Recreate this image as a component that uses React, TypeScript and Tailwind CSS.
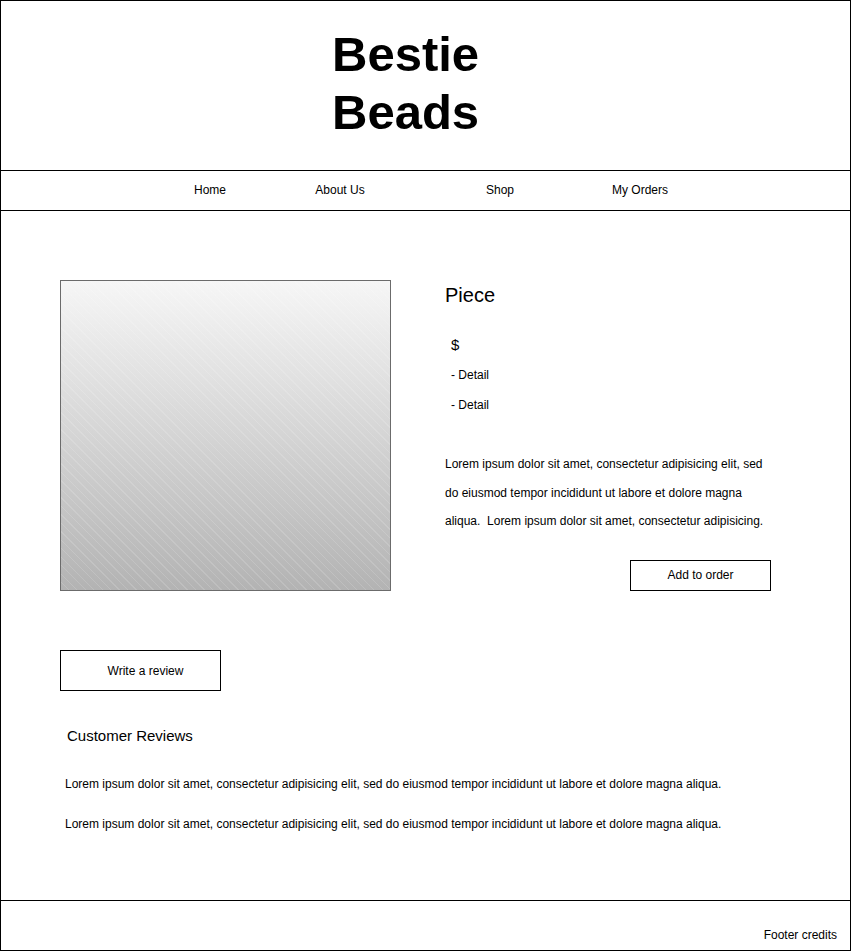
const navItems = [
  { label: "Home", width: "w-[120px]" },
  { label: "About Us", width: "w-[140px]" },
  { label: "Shop", width: "w-[180px]" },
  { label: "My Orders", width: "w-[100px]" },
];

const reviews = [
  "Lorem ipsum dolor sit amet, consectetur adipisicing elit, sed do eiusmod tempor incididunt ut labore et dolore magna aliqua.",
  "Lorem ipsum dolor sit amet, consectetur adipisicing elit, sed do eiusmod tempor incididunt ut labore et dolore magna aliqua.",
];

export default function App() {
  return (
    <div className="w-[851px] h-[951px] border border-black bg-white text-black flex flex-col font-['Liberation_Sans',Arial,sans-serif]">
      {/* header */}
      <header className="h-[170px] shrink-0 border-b border-black pt-[24px] pl-[331px]">
        <h1 className="text-[49px] leading-[58px] font-bold">
          Bestie
          <br />
          Beads
        </h1>
      </header>

      {/* nav */}
      <nav className="h-[40px] shrink-0 border-b border-black flex items-center pb-[2px] pl-[149px] text-[12px] leading-4">
        {navItems.map((item) => (
          <div key={item.label} className={`${item.width} text-center`}>
            {item.label}
          </div>
        ))}
      </nav>

      {/* product */}
      <main className="flex-1 pl-[59px] pt-[69px]">
        <div className="flex gap-[54px]">
          <div className="w-[331px] h-[311px] border border-[#6b6b6b] bg-[repeating-linear-gradient(45deg,rgba(255,255,255,0)_0px,rgba(255,255,255,0)_5px,rgba(255,255,255,0.14)_5px,rgba(255,255,255,0.14)_6px),linear-gradient(to_bottom,#f6f6f6,#b3b3b3)]" />

          <div className="flex flex-col">
            <h2 className="mt-[3px] text-[20px] leading-6">Piece</h2>
            <p className="mt-[28px] ml-[6px] text-[15px] leading-5">$</p>
            <p className="mt-[12px] ml-[6px] text-[12px] leading-4">- Detail</p>
            <p className="mt-[14px] ml-[6px] text-[12px] leading-4">- Detail</p>
            <p className="mt-[37px] w-[330px] text-[12px] leading-[28.5px]">
              Lorem ipsum dolor sit amet, consectetur adipisicing elit, sed do
              eiusmod tempor incididunt ut labore et dolore magna aliqua.&nbsp;
              Lorem ipsum dolor sit amet, consectetur adipisicing.
            </p>
            <button className="mt-[24px] ml-[185px] w-[141px] h-[31px] border border-black text-[12px] leading-4">
              Add to order
            </button>
          </div>
        </div>

        {/* reviews */}
        <button className="mt-[59px] w-[161px] h-[41px] border border-black text-[12px] leading-4 pl-[10px]">
          Write a review
        </button>
        <h3 className="mt-[35px] ml-[7px] text-[15px] leading-5">Customer Reviews</h3>
        <div className="ml-[5px] mt-[30px] flex flex-col gap-[24px] text-[12px] leading-4">
          {reviews.map((r, i) => (
            <p key={i}>{r}</p>
          ))}
        </div>
      </main>

      {/* footer */}
      <footer className="h-[50px] shrink-0 border-t border-black pt-[26px] pr-[13px] text-right text-[12px] leading-4">
        Footer credits
      </footer>
    </div>
  );
}
